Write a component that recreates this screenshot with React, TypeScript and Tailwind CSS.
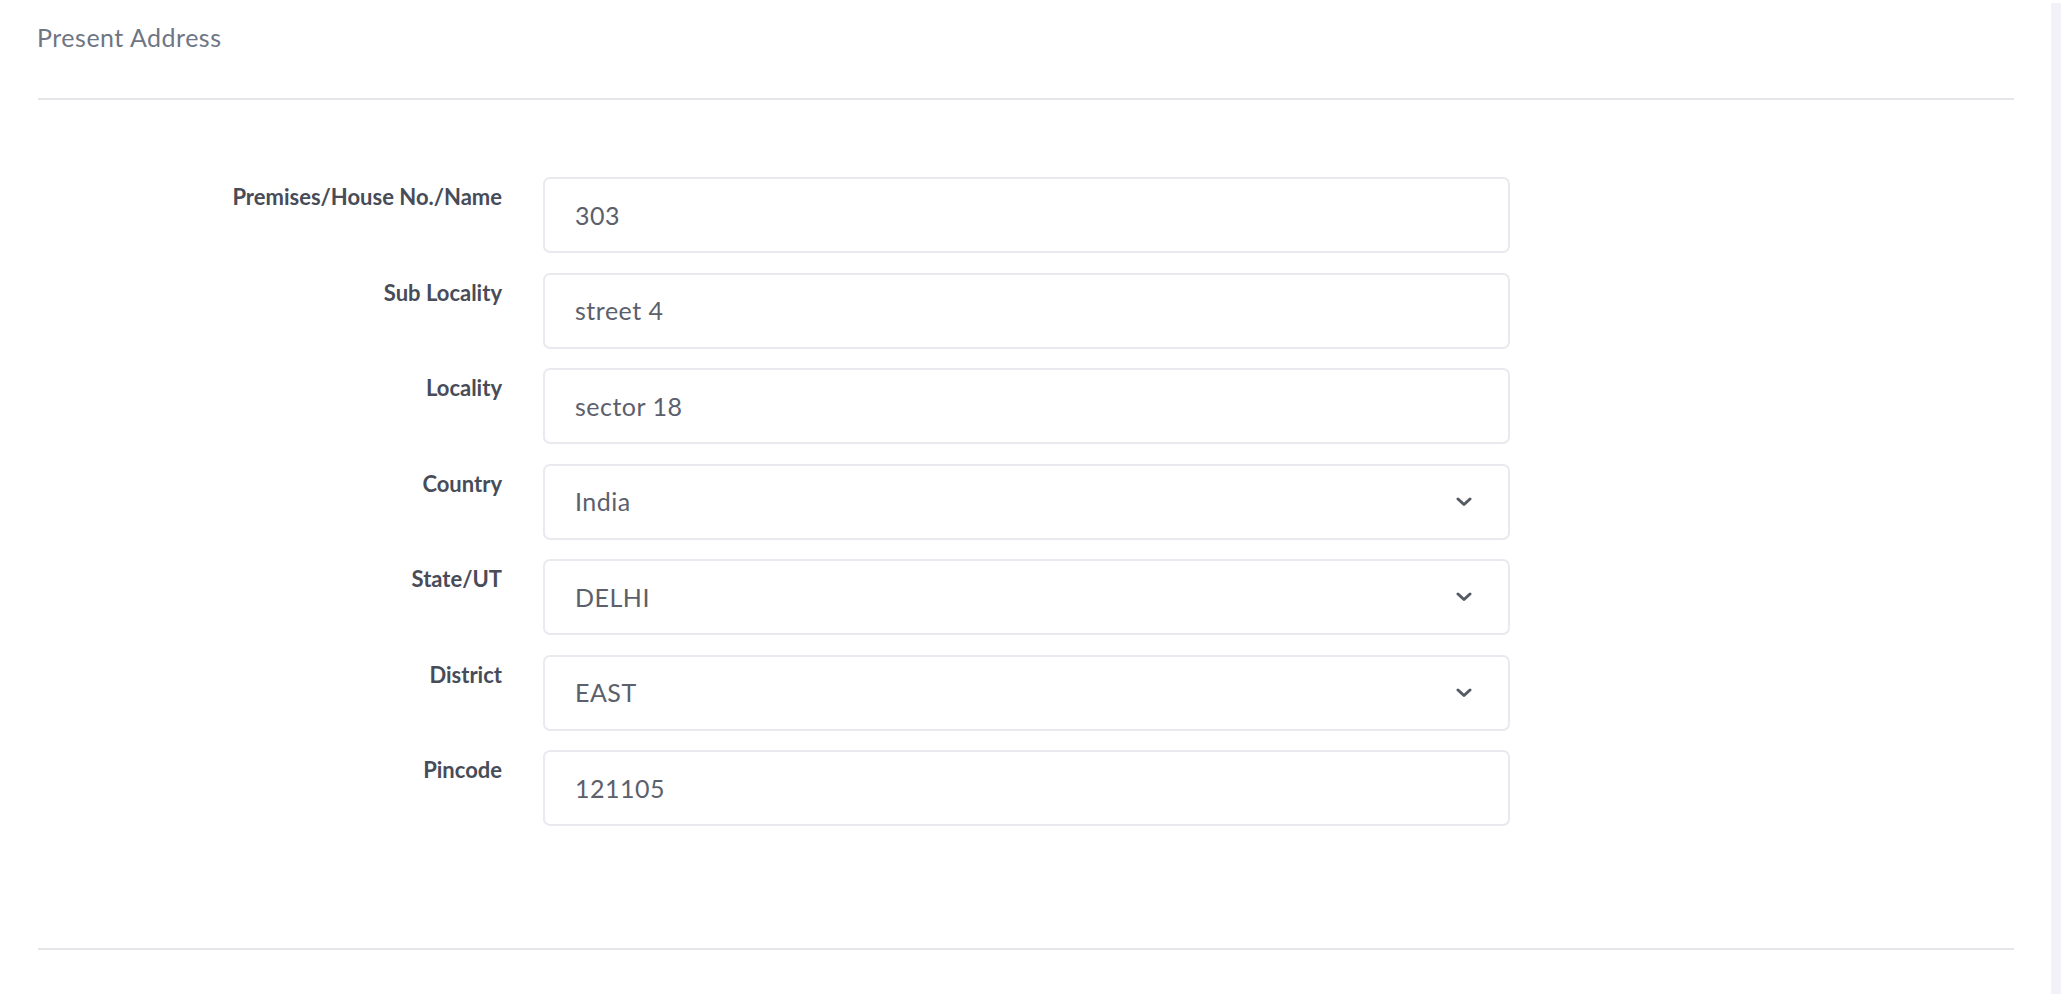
import React from "react";

type Field = { label: string; value: string; select?: boolean };

const fields: Field[] = [
  { label: "Premises/House No./Name", value: "303" },
  { label: "Sub Locality", value: "street 4" },
  { label: "Locality", value: "sector 18" },
  { label: "Country", value: "India", select: true },
  { label: "State/UT", value: "DELHI", select: true },
  { label: "District", value: "EAST", select: true },
  { label: "Pincode", value: "121105" },
];

function Chevron() {
  return (
    <svg width="16" height="10" viewBox="0 0 16 10" className="shrink-0">
      <path d="M2 2 L8 7.5 L14 2" fill="none" stroke="#555a63" strokeWidth="3" strokeLinecap="round" strokeLinejoin="round" />
    </svg>
  );
}

export default function App() {
  return (
    <div className="relative w-[2062px] h-[994px] bg-white overflow-hidden" style={{ fontFamily: "Lato, 'Noto Sans', sans-serif" }}>
      <div className="flex h-full">
        <div className="flex-1 pl-[37px] pr-[37px] pt-[25px]">
          <div className="text-[25px] leading-[25px] tracking-[0.5px] text-[#6e7583]">Present Address</div>
          <div className="mt-[48px] h-[2px] bg-[#e6e6ea] w-[1976px] ml-[1px]" />
          <div className="mt-[77px] flex flex-col gap-[19.5px]">
            {fields.map((f) => (
              <div key={f.label} className="flex items-start">
                <div className="w-[465px] shrink-0 text-right pt-[9px] text-[22px] leading-[22px] font-bold text-[#474c58]">
                  {f.label}
                </div>
                <div className="ml-[41px] w-[967px] h-[76px] rounded-[7px] border-2 border-[#e9e9ef] flex items-center pl-[30px] pr-[36px]">
                  <span className="flex-1 text-[25px] leading-[25px] tracking-[0.5px] text-[#5b606c]">{f.value}</span>
                  {f.select && <Chevron />}
                </div>
              </div>
            ))}
          </div>
          <div className="mt-[122px] h-[2px] bg-[#e6e6ea] w-[1976px] ml-[1px]" />
        </div>
        <div className="w-[12px] mr-[1px] mt-[3px] bg-[#f1f1f7]" />
      </div>
    </div>
  );
}
